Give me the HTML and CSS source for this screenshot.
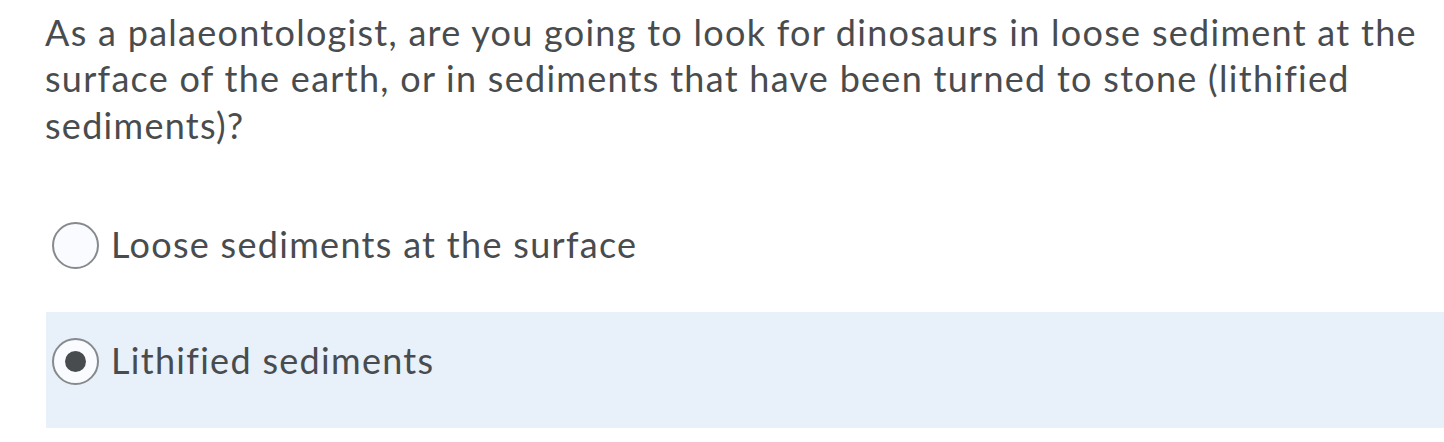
FILE: index.html
```html
<!DOCTYPE html>
<html lang="en">
<head>
<meta charset="utf-8">
<title>Question</title>
<link rel="stylesheet" href="styles.css">
</head>
<body>
<div class="question">
  <p class="prompt">As a palaeontologist, are you going to look for dinosaurs in loose sediment at the surface of the earth, or in sediments that have been turned to stone (lithified sediments)?</p>
  <div class="options">
    <label class="option">
      <span class="radio"></span>
      <span class="label-text">Loose sediments at the surface</span>
    </label>
    <label class="option selected">
      <span class="radio checked"></span>
      <span class="label-text">Lithified sediments</span>
    </label>
  </div>
</div>
</body>
</html>
```
FILE: styles.css
```css
html, body {
  margin: 0;
  padding: 0;
  background: #ffffff;
}
body {
  font-family: Lato, "Open Sans", sans-serif;
  color: #494c4e;
}
.question {
  padding: 8.5px 0 0 45px;
}
.prompt {
  margin: 0;
  font-size: 36px;
  line-height: 46.5px;
  letter-spacing: 1.28px;
}
.options {
  margin-top: 48px;
  margin-left: 1px;
}
.option {
  display: flex;
  align-items: center;
  height: 116px;
  box-sizing: border-box;
  padding: 26px 0 43px 6px;
  gap: 12px;
}
.option.selected {
  background: #e8f0fa;
}
.radio {
  width: 47px;
  height: 47px;
  box-sizing: border-box;
  border: 2px solid #868a8d;
  border-radius: 50%;
  background: #f9fbff;
  display: flex;
  align-items: center;
  justify-content: center;
  flex: none;
}
.radio.checked::after {
  content: "";
  width: 21px;
  height: 21px;
  border-radius: 50%;
  background: #494c4e;
}
.label-text {
  font-size: 36px;
  line-height: 46px;
  letter-spacing: 1.3px;
  padding-bottom: 4px;
}
```
